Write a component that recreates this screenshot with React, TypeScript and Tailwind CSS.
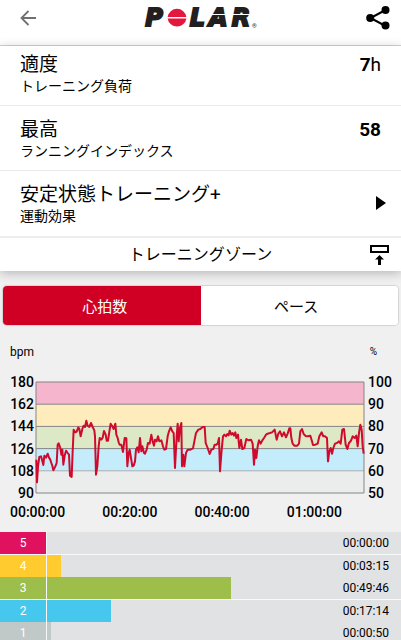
import { useState } from "react";

const SUMMARY_ROWS = [
  { title: "適度", subtitle: "トレーニング負荷", value: "7", unit: "h" },
  { title: "最高", subtitle: "ランニングインデックス", value: "58", unit: "" },
];

const TABS = [
  { id: "heart-rate", label: "心拍数" },
  { id: "pace", label: "ペース" },
];

const BPM_TICKS = [180, 162, 144, 126, 108, 90];
const PERCENT_TICKS = [100, 90, 80, 70, 60, 50];
const TIME_TICKS = ["00:00:00", "00:20:00", "00:40:00", "01:00:00"];

const CHART_BANDS = ["#f5b5cc", "#ffecbd", "#dde9c6", "#c5ecfa", "#ebeded"];

const ZONES = [
  { zone: 5, time: "00:00:00", percent: 0, color: "bg-[#e0115f]" },
  { zone: 4, time: "00:03:15", percent: 4, color: "bg-[#ffcb2f]" },
  { zone: 3, time: "00:49:46", percent: 52, color: "bg-[#9ebe4b]" },
  { zone: 2, time: "00:17:14", percent: 18, color: "bg-[#46c7ee]" },
  { zone: 1, time: "00:00:50", percent: 1, color: "bg-[#c1c9c8]" },
];

// Heart rate curve, split in three stretches of the session
const HEART_RATE = [
  {
    start: 0,
    points: [
      [110, 270], [112, 338], [115, 290], [119, 262], [124, 260], [127, 270], [131, 286], [134, 258],
      [139, 264], [144, 252], [148, 264], [152, 270], [155, 280], [158, 288], [161, 302], [167, 290],
      [171, 280], [174, 225], [177, 221], [182, 235], [185, 255], [188, 240], [191, 285], [195, 258],
      [199, 243], [204, 250], [208, 255], [211, 318], [216, 322], [219, 245], [222, 180], [227, 188],
      [231, 186], [236, 173], [239, 178], [243, 200], [248, 178], [252, 168], [256, 172], [260, 153],
      [264, 168], [269, 172], [274, 160], [279, 172], [284, 182], [286, 200], [289, 315], [293, 290],
      [297, 230], [300, 205], [305, 210], [309, 204], [313, 184], [318, 195], [321, 213], [325, 213],
      [330, 180], [333, 162], [338, 170], [342, 178], [347, 162], [350, 195], [354, 205], [357, 218],
      [360, 225], [365, 225], [370, 247], [375, 205], [380, 206], [383, 290], [387, 250], [390, 240],
      [394, 265], [398, 290],
    ],
  },
  {
    start: 402,
    points: [
      [0, 288], [4, 275], [7, 240], [11, 233], [15, 248], [19, 205], [23, 245], [26, 230], [31, 250],
      [34, 252], [39, 240], [43, 220], [48, 222], [53, 195], [57, 215], [61, 228], [64, 210], [69, 215],
      [73, 200], [77, 215], [83, 212], [88, 230], [92, 240], [97, 238], [102, 200], [106, 185],
      [111, 173], [116, 185], [120, 190], [124, 295], [129, 200], [132, 162], [135, 215], [139, 175],
      [143, 160], [145, 290], [149, 255], [152, 290], [157, 250], [162, 240], [170, 240], [178, 236],
      [183, 210], [187, 190], [194, 180], [200, 178], [207, 172], [213, 172], [216, 220], [222, 235],
      [228, 253], [233, 240], [239, 238], [243, 225], [248, 225], [252, 222], [256, 205], [259, 305],
      [264, 240], [268, 200], [272, 195], [277, 200], [281, 193], [285, 197], [288, 183], [293, 195],
      [297, 190], [301, 198], [305, 188], [308, 205], [313, 195], [317, 235], [322, 210], [326, 238],
      [332, 235], [338, 208], [345, 212], [352, 210], [357, 222], [361, 285], [364, 240], [368, 265],
      [372, 230], [376, 212], [381, 222], [386, 212], [391, 205], [397, 195],
    ],
  },
  {
    start: 801,
    points: [
      [3, 192], [10, 190], [16, 188], [24, 180], [30, 210], [35, 192], [40, 185], [46, 200], [52, 188],
      [58, 203], [63, 192], [68, 176], [71, 176], [74, 205], [78, 222], [83, 228], [92, 228], [97, 222],
      [101, 185], [106, 178], [111, 193], [118, 200], [124, 200], [131, 198], [136, 215], [139, 226],
      [146, 225], [153, 222], [158, 200], [165, 188], [170, 200], [175, 200], [181, 205], [184, 275],
      [188, 245], [192, 235], [196, 252], [200, 235], [205, 222], [211, 220], [217, 215], [222, 222],
      [227, 180], [232, 178], [237, 225], [242, 238], [247, 220], [253, 213], [258, 200], [264, 205],
      [269, 198], [273, 230], [277, 190], [281, 165], [285, 180], [288, 230], [291, 252],
    ],
  },
];

const linePoints = HEART_RATE.flatMap(({ start, points }) =>
  points.map(([x, y]) => `${x + start},${y}`)
).join(" ");

function Logo() {
  return (
    <div
      className="flex items-center pr-1 font-['DejaVu_Sans'] text-2xl leading-6 font-bold italic text-[#231f20]"
      role="img"
      aria-label="Polar"
    >
      <span className="[-webkit-text-stroke:2px_#231f20]">P</span>
      <svg width="20" height="20" viewBox="0 0 20 20" className="mr-[3px] ml-1" aria-hidden="true">
        <path d="M.6 9a9.500 9.500 0 0 1 18.800 0ZM.6 10.400h18.800A9.500 9.500 0 0 1 .6 10.400Z" fill="#e4173e" />
      </svg>
      <span className="relative flex gap-1 [-webkit-text-stroke:2px_#231f20]">
        <span>L</span>
        <span>A</span>
        <span>R</span>
        {/* Slit through the last two letters */}
        <span className="absolute top-2 right-0 h-px w-10 bg-white" />
      </span>
      <span className="ml-[2px] self-end font-[Roboto] text-[6px] leading-[8px] font-normal not-italic">®</span>
    </div>
  );
}

function HeartRateChart() {
  return (
    <svg
      viewBox="109 37 984 333"
      preserveAspectRatio="none"
      className="my-[11px] h-[111px] min-w-0 flex-1 overflow-visible"
      role="img"
      aria-label="心拍数"
    >
      {CHART_BANDS.map((fill, i) => (
        <rect key={fill} x="109" y={37 + i * 66.6} width="984" height="66.6" fill={fill} />
      ))}
      {CHART_BANDS.map((fill, i) => (
        <path
          key={fill}
          d={`M109 ${37 + i * 66.6}H1093`}
          stroke={i === 4 ? "#a9b0b2" : "#858585"}
          vectorEffect="non-scaling-stroke"
        />
      ))}
      <path d="M109 37V370H1093V37" fill="none" stroke="#858585" vectorEffect="non-scaling-stroke" />
      <polyline
        points={linePoints}
        fill="none"
        stroke="#cf0a2c"
        strokeWidth="2"
        strokeLinejoin="round"
        vectorEffect="non-scaling-stroke"
      />
    </svg>
  );
}

export default function App() {
  const [activeTab, setActiveTab] = useState("heart-rate");

  return (
    <div className="h-screen overflow-hidden bg-[#f0f0f0] font-[Roboto,'Noto_Sans_CJK_JP',sans-serif] text-black">
      {/* Header */}
      <header className="flex h-[46px] items-center justify-between border-b border-[#d4d4d4] bg-white pr-[11px] pb-[9px] pl-5">
        <button type="button" aria-label="戻る" className="w-5">
          <svg width="16" height="16" viewBox="0 0 16 16" fill="none" stroke="#707070" strokeWidth="1.8">
            <path d="M16 8H2M8.500 1 1.500 8l7 7" />
          </svg>
        </button>
        <Logo />
        <button type="button" aria-label="共有">
          <svg width="24" height="26" viewBox="0 0 24 26">
            <path d="M19.500 5 4.500 13l15 8" fill="none" stroke="#000" strokeWidth="2" />
            <circle cx="19.500" cy="5" r="4" />
            <circle cx="4.200" cy="13" r="4" />
            <circle cx="19.500" cy="20.500" r="4" />
          </svg>
        </button>
      </header>

      <section className="relative bg-white shadow-[0_2px_10px_rgba(0,0,0,0.25)]">
        {/* Summary rows */}
        {SUMMARY_ROWS.map((row) => (
          <div
            key={row.subtitle}
            className="flex h-[60px] items-start justify-between border-b border-[#ebebeb] pt-[7px] pr-5 pl-5 not-first:h-[65px] not-first:pt-3"
          >
            <div>
              <h2 className="text-[19px] leading-6">{row.title}</h2>
              <p className="text-sm leading-[18px]">{row.subtitle}</p>
            </div>
            <p className="text-[19px] leading-6">
              <span className="font-bold">{row.value}</span>
              {row.unit}
            </p>
          </div>
        ))}
        <button
          type="button"
          className="flex h-[67px] w-full items-start justify-between border-b-2 border-[#ededed] pt-3 pr-[15px] pl-5 text-left"
        >
          <span>
            <span className="block text-[19px] leading-6">安定状態トレーニング+</span>
            <span className="block text-sm leading-[18px]">運動効果</span>
          </span>
          <svg width="10" height="14" viewBox="0 0 10 14" className="mt-[13px]" aria-hidden="true">
            <path d="M0 0l10 7-10 7z" />
          </svg>
        </button>

        {/* Section title */}
        <div className="flex h-[33px] items-center justify-between pr-3 pl-[31px]">
          <h2 className="flex-1 text-center text-base leading-6">トレーニングゾーン</h2>
          <button type="button" aria-label="折りたたむ">
            <svg width="19" height="20" viewBox="0 0 19 20">
              <path d="M1 1h17v6H1z" fill="none" stroke="#000" strokeWidth="2" />
              <path d="M9.500 10 5 14.500h3V20h3v-5.500h3z" />
            </svg>
          </button>
        </div>
      </section>

      {/* Tabs */}
      <div
        className="mx-[3px] mt-[15px] grid h-[39px] grid-cols-2 overflow-hidden rounded bg-white shadow-[0_0_1px_1px_rgba(0,0,0,0.12)]"
        role="tablist"
      >
        {TABS.map((tab) => (
          <button
            key={tab.id}
            type="button"
            role="tab"
            aria-selected={activeTab === tab.id}
            onClick={() => setActiveTab(tab.id)}
            className={`pt-[2px] text-[15px] leading-6 first:pl-[6px] last:pr-[6px] ${
              activeTab === tab.id ? "bg-[#d00025] text-white" : "bg-white text-black"
            }`}
          >
            {tab.label}
          </button>
        ))}
      </div>

      {/* Chart */}
      <div className="mt-[19px] flex justify-between pr-6 pl-[10px] text-xs leading-4">
        <span>bpm</span>
        <span className="text-[10px]">%</span>
      </div>
      <div className="mt-[11px] flex text-sm leading-[22px] font-medium">
        <div className="flex h-[133px] w-9 flex-col justify-between pr-[2px] text-right">
          {BPM_TICKS.map((tick) => (
            <span key={tick}>{tick}</span>
          ))}
        </div>
        <HeartRateChart />
        <div className="flex h-[133px] w-[37px] flex-col justify-between pl-1">
          {PERCENT_TICKS.map((tick) => (
            <span key={tick}>{tick}</span>
          ))}
        </div>
      </div>
      <div className="grid grid-cols-4 pr-[22px] pl-[10px] text-sm leading-4 font-medium">
        {TIME_TICKS.map((tick) => (
          <span key={tick}>{tick}</span>
        ))}
      </div>

      {/* Time in zones */}
      <ul className="mt-3 flex flex-col text-xs">
        {ZONES.map((item) => (
          <li
            key={item.zone}
            className="flex h-[22px] bg-[#e1e2e4] even:h-[23px] even:border-t even:border-white/80"
          >
            <span className={`flex w-[46px] shrink-0 items-center justify-center text-white ${item.color}`}>
              {item.zone}
            </span>
            <span className="flex min-w-0 flex-1 items-center border-l border-white/80">
              <span className={`h-full ${item.color}`} style={{ width: `${item.percent}%` }} />
              <span className="ml-auto pr-3">{item.time}</span>
            </span>
          </li>
        ))}
      </ul>
    </div>
  );
}
